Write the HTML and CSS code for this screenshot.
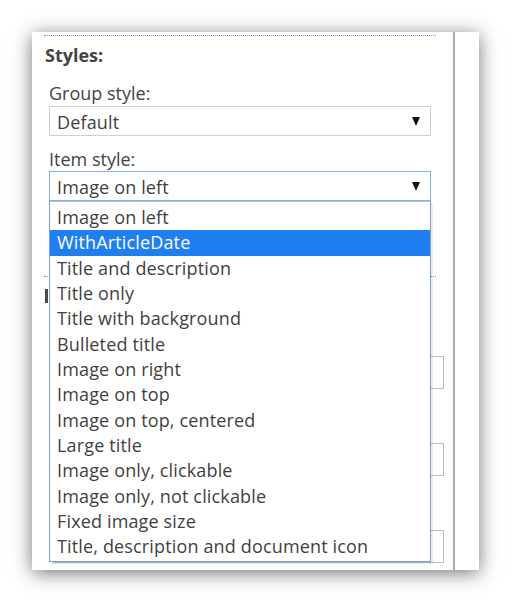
FILE: index.html
```html
<!DOCTYPE html>
<html>
<head>
<meta charset="utf-8">
<link rel="stylesheet" href="styles.css">
</head>
<body>
<div class="panel">
  <div class="content">
    <div class="dots"></div>
    <h2 class="section-title">Styles:</h2>
    <div class="label label-first">Group style:</div>
    <div class="select select-plain"><span>Default</span><i class="arrow"></i></div>
    <div class="label label-second">Item style:</div>
    <div class="select select-focus"><span>Image on left</span><i class="arrow"></i></div>

    <div class="dots dots-lower"></div>
    <div class="covered-title"></div>
    <div class="fields">
      <div class="field"></div>
      <div class="field"></div>
      <div class="field"></div>
    </div>

    <ul class="listbox">
      <li>Image on left</li>
      <li class="selected">WithArticleDate</li>
      <li>Title and description</li>
      <li>Title only</li>
      <li>Title with background</li>
      <li>Bulleted title</li>
      <li>Image on right</li>
      <li>Image on top</li>
      <li>Image on top, centered</li>
      <li>Large title</li>
      <li>Image only, clickable</li>
      <li>Image only, not clickable</li>
      <li>Fixed image size</li>
      <li>Title, description and document icon</li>
    </ul>
  </div>
</div>
</body>
</html>
```

FILE: styles.css
```css
html, body {
  margin: 0;
  padding: 0;
  background: #ffffff;
}

body {
  font-family: "Open Sans", "Noto Sans", "Liberation Sans", sans-serif;
  color: #3f3f3f;
  width: 511px;
  height: 602px;
  overflow: hidden;
}

.panel {
  margin: 32px 0 0 32px;
  width: 447px;
  height: 538px;
  background: #ffffff;
  box-shadow: 0 3px 18px rgba(0, 0, 0, 0.55);
  display: flex;
}

.content {
  position: relative;
  width: 421px;
  height: 100%;
  border-right: 2px solid #a9a9a9;
}

.dots {
  margin: 3px 0 0 12px;
  width: 392px;
  height: 0;
  border-top: 1px dotted #7d8fcf;
}

.section-title {
  margin: 7px 0 0 13px;
  font-size: 18px;
  font-weight: 700;
  line-height: 24px;
  color: #444444;
}

.label {
  margin-left: 17px;
  font-size: 18px;
  line-height: 24px;
  color: #444444;
}

.label-first { margin-top: 14px; }
.label-second { margin-top: 11px; }

.select {
  margin: 1px 0 0 17px;
  width: 382px;
  height: 30px;
  box-sizing: border-box;
  display: flex;
  align-items: center;
  justify-content: space-between;
  padding: 2px 10px 0 7px;
  font-size: 18px;
  line-height: 28px;
  letter-spacing: 0.15px;
  color: #3f3f3f;
  background: #ffffff;
}

.select-plain {
  border: 1px solid #cfcfcf;
}

.select-focus {
  margin-top: 0;
  border: 1px solid #8ab0e8;
}

.arrow {
  width: 0;
  height: 0;
  margin-top: -2px;
  border-left: 4.5px solid transparent;
  border-right: 4.5px solid transparent;
  border-top: 9px solid #111111;
}

.dots-lower {
  margin-top: 75px;
}

.covered-title {
  margin: 12px 0 0 13px;
  width: 3px;
  height: 14px;
  background: #4a4a4a;
}

.fields {
  margin: 53px 0 0 21px;
  display: flex;
  flex-direction: column;
  gap: 54px;
}

.field {
  width: 391px;
  height: 33px;
  box-sizing: border-box;
  border: 1px solid #bdbdbd;
}

.listbox {
  position: absolute;
  left: 17px;
  top: 169px;
  width: 382px;
  margin: 0;
  padding: 3px 0 1px;
  list-style: none;
  box-sizing: border-box;
  border: 1px solid #7f9fc9;
  border-top: 1px solid #a8c0e0;
  background: #ffffff;
  box-shadow: 2px 2px 0 rgba(0, 0, 0, 0.08);
}

.listbox li {
  height: 25.33px;
  line-height: 25.33px;
  padding-left: 7px;
  font-size: 18px;
  letter-spacing: 0.15px;
  color: #3f3f3f;
  white-space: nowrap;
}

.listbox li.selected {
  background: #1f7ef0;
  color: #ffffff;
}
```
